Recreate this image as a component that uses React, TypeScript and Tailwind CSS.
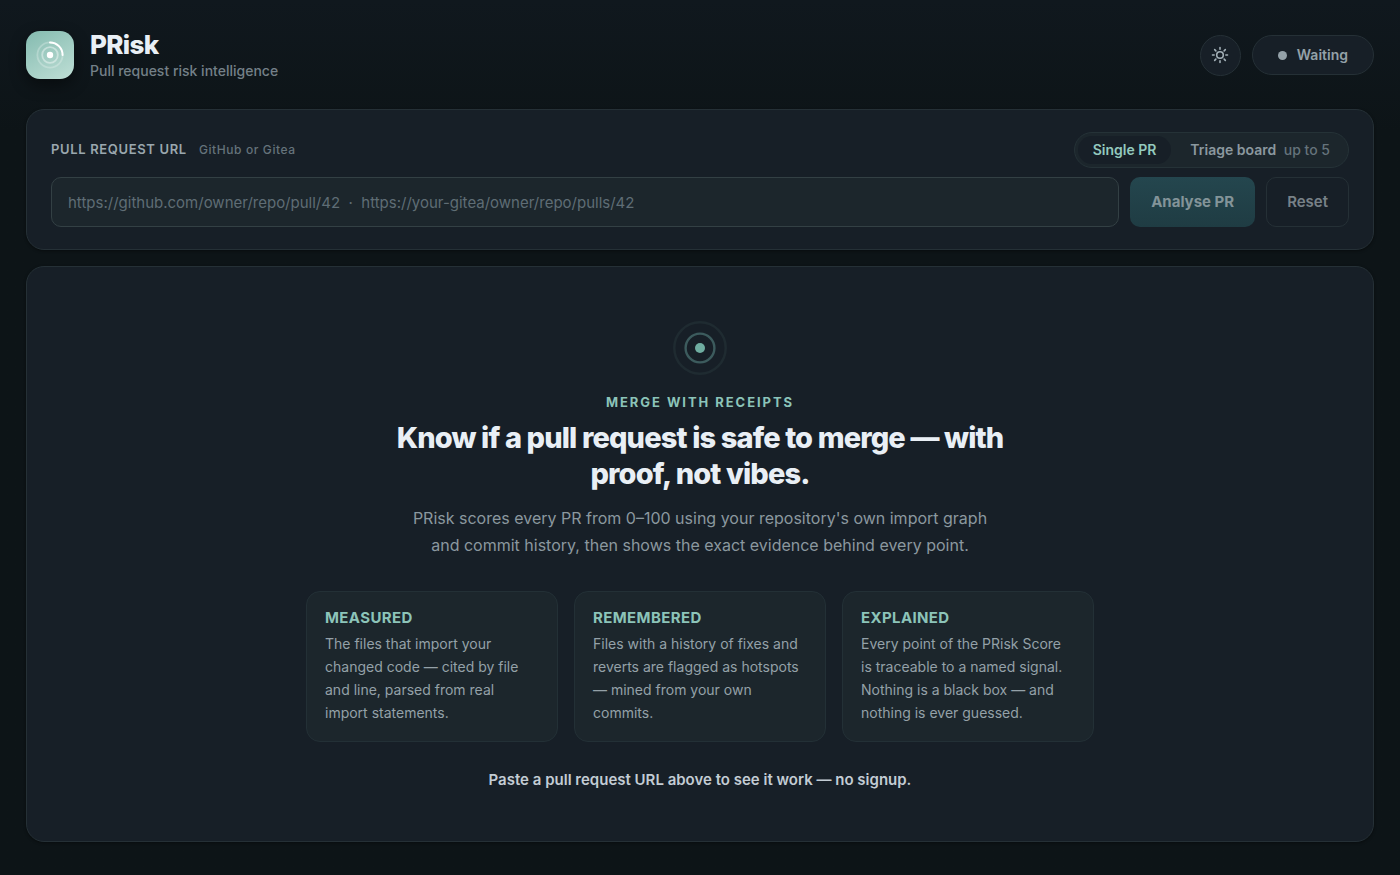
const features = [
  {
    title: "Measured",
    text: "The files that import your changed code — cited by file and line, parsed from real import statements.",
  },
  {
    title: "Remembered",
    text: "Files with a history of fixes and reverts are flagged as hotspots — mined from your own commits.",
  },
  {
    title: "Explained",
    text: "Every point of the PRisk Score is traceable to a named signal. Nothing is a black box — and nothing is ever guessed.",
  },
];

const LogoMark = () => (
  <svg viewBox="0 0 48 48" className="h-12 w-12" fill="none" aria-hidden="true">
    <circle cx="24" cy="24" r="12.6" stroke="white" strokeOpacity="0.25" strokeWidth="1.8" />
    <circle cx="24" cy="24" r="7.8" stroke="white" strokeOpacity="0.42" strokeWidth="1.8" />
    <path d="M24 11.4a12.6 12.6 0 0 1 12.6 12.6" stroke="white" strokeWidth="2" strokeLinecap="round" />
    <circle cx="24" cy="24" r="3.2" fill="white" />
  </svg>
);

const SunIcon = () => (
  <svg
    viewBox="0 0 24 24"
    className="h-[18px] w-[18px]"
    fill="none"
    stroke="currentColor"
    strokeWidth="2.1"
    strokeLinecap="round"
    aria-hidden="true"
  >
    <circle cx="12" cy="12" r="4.4" />
    <path d="M12 2v2.2M12 19.8V22M2 12h2.2M19.8 12H22M4.9 4.9l1.6 1.6M17.5 17.5l1.6 1.6M4.9 19.1l1.6-1.6M17.5 6.5l1.6-1.6" />
  </svg>
);

const Header = () => (
  <header className="flex items-center justify-between">
    <div className="flex items-center gap-4">
      <div className="rounded-[14px] bg-linear-150 from-[#84bbb0] to-[#bfdfd6] shadow-[0_6px_16px_rgba(0,0,0,0.45)]">
        <LogoMark />
      </div>
      <div>
        <h1 className="text-[26px] leading-8 font-extrabold tracking-tight text-[#e9eff5]">PRisk</h1>
        <p className="text-sm leading-5 font-medium text-[#748088]">Pull request risk intelligence</p>
      </div>
    </div>
    <div className="flex items-center gap-[11px]">
      <button
        aria-label="Toggle theme"
        className="grid h-[41px] w-[41px] place-content-center rounded-full border border-[#253036] bg-[#171f27] text-[#a3b0b7]"
      >
        <SunIcon />
      </button>
      <div className="flex h-10 items-center gap-[10px] rounded-full border border-[#253036] bg-[#171f27] px-[25px] text-sm font-semibold text-[#94a1a8]">
        <span className="h-[9px] w-[9px] rounded-full bg-[#94a1a8]" />
        Waiting
      </div>
    </div>
  </header>
);

const UrlForm = () => (
  <section className="rounded-[18px] border border-[#253036] bg-[#171f27] px-6 py-[22px] shadow-[0_1px_3px_rgba(0,0,0,0.4)]">
    <div className="flex items-center justify-between">
      <label
        htmlFor="pr-url"
        className="flex items-center gap-3 text-[13px] font-semibold tracking-wider text-[#9aa7ae]"
      >
        PULL REQUEST URL
        <span className="text-xs font-medium tracking-wider text-[#65737b]">GitHub or Gitea</span>
      </label>
      <div className="flex h-9 gap-1 rounded-full border border-[#253237] bg-[#1c262c] p-[3px] text-sm font-semibold">
        <button className="rounded-full bg-[#171f27] px-[15px] text-[#93c9be]">Single PR</button>
        <button className="rounded-full px-[15px] text-[#8b989f]">
          Triage board <span className="ml-1 font-medium text-[#65737b]">up to 5</span>
        </button>
      </div>
    </div>
    <div className="mt-[9px] flex gap-[11px]">
      <input
        id="pr-url"
        type="text"
        placeholder="https://github.com/owner/repo/pull/42  ·  https://your-gitea/owner/repo/pulls/42"
        className="h-[50px] min-w-0 flex-1 rounded-[10px] border border-[#334044] bg-[#1c262c] px-4 text-[15px] text-[#e9eff5] outline-none placeholder:text-[#5f6d75]"
      />
      <button className="rounded-[10px] bg-linear-to-b from-[#24464e] to-[#1f3c43] px-[21px] text-[15px] font-bold text-[#839499]">
        Analyse PR
      </button>
      <button className="rounded-[10px] border border-[#253036] px-5 text-[15px] font-semibold text-[#788188]">
        Reset
      </button>
    </div>
  </section>
);

const EmptyState = () => (
  <section className="flex flex-1 flex-col items-center rounded-[18px] border border-[#253036] bg-[#171f27] px-6 pt-[54px] pb-12 text-center shadow-[0_1px_3px_rgba(0,0,0,0.4)]">
    <svg viewBox="0 0 54 54" className="h-[54px] w-[54px]" fill="none" aria-hidden="true">
      <circle cx="27" cy="27" r="25.7" stroke="#1f2b31" strokeWidth="2.5" />
      <circle cx="27" cy="27" r="14.4" stroke="#3c5b5d" strokeWidth="2.4" />
      <circle cx="27" cy="27" r="5" fill="#6fada1" />
    </svg>
    <p className="mt-[17px] text-[13px] leading-5 font-bold tracking-[0.15em] text-[#8cc4b9]">MERGE WITH RECEIPTS</p>
    <h2 className="mt-2 max-w-[640px] text-[29px] leading-9 font-extrabold tracking-[-0.03em] text-[#e9eff5]">
      Know if a pull request is safe to merge — with proof, not vibes.
    </h2>
    <p className="mt-[13px] max-w-[600px] text-base leading-[27px] text-[#8b989f]">
      PRisk scores every PR from 0–100 using your repository's own import graph and commit history, then shows the
      exact evidence behind every point.
    </p>
    <div className="mt-8 grid w-full max-w-[788px] grid-cols-3 gap-4 text-left">
      {features.map((feature) => (
        <div key={feature.title} className="rounded-[14px] border border-[#233036] bg-[#1c262c] px-[18px] pt-[15px] pb-[17px]">
          <h3 className="text-[15px] leading-[22px] font-bold tracking-wide text-[#8cc4b9] uppercase">
            {feature.title}
          </h3>
          <p className="mt-[3px] text-sm leading-[23px] text-[#94a1a8]">{feature.text}</p>
        </div>
      ))}
    </div>
    <p className="mt-7 text-[15px] leading-5 font-semibold text-[#c3ccd4]">
      Paste a pull request URL above to see it work — no signup.
    </p>
  </section>
);

const App: React.FC = () => {
  return (
    <div className="flex min-h-screen flex-col bg-[#0d1417] bg-linear-to-b from-[#10181e] to-[#0d1417] to-15% px-[26px] pt-[29px] pb-[33px] font-['Inter',sans-serif]">
      <Header />
      <main className="mt-7 flex flex-1 flex-col gap-4">
        <UrlForm />
        <EmptyState />
      </main>
    </div>
  );
};

export default App;
